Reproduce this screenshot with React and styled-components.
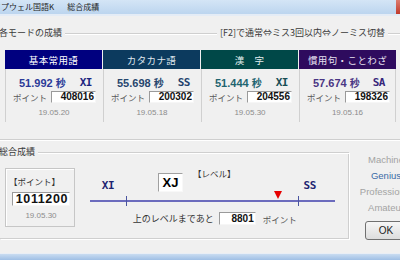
import React from 'react'
import styled, { createGlobalStyle } from 'styled-components'

const JP = `"Noto Sans CJK JP", "Noto Sans", sans-serif`
const NUM = `"Liberation Sans", Arial, sans-serif`
const MONO = `"DejaVu Sans Mono", "Liberation Mono", monospace`

const GlobalStyle = createGlobalStyle`
  html, body {
    margin: 0;
    padding: 0;
    background: #f0f0f0;
  }
  body {
    font-family: ${JP};
  }
`

const modes = [
  { title: '基本常用語', bg: '#00007f', fg: '#ffffff', time: '51.992', rank: 'XI', point: '408016', date: '19.05.20', tc: '#2b3a98', rc: '#1c2580' },
  { title: 'カタカナ語', bg: '#0c3a5e', fg: '#dfe6ee', time: '55.698', rank: 'SS', point: '200302', date: '19.05.18', tc: '#27466e', rc: '#1d416c' },
  { title: '漢　字', bg: '#004848', fg: '#e2eeee', time: '51.444', rank: 'XI', point: '204556', date: '19.05.30', tc: '#1f6470', rc: '#174d55' },
  { title: '慣用句・ことわざ', bg: '#2e0b5e', fg: '#e6e0f0', time: '57.674', rank: 'SA', point: '198326', date: '19.05.16', tc: '#4a3684', rc: '#36267a' },
]

const levels = [
  { name: 'Machine' },
  { name: 'Genius', active: true },
  { name: 'Professional' },
  { name: 'Amateur' },
]

// position of the marker between the current level and the next one
const progress = 184 / 245

function ModeCard({ mode }) {
  return (
    <Card>
      <CardHead $bg={mode.bg} $fg={mode.fg}>{mode.title}</CardHead>
      <CardBody>
        <TimeRow>
          <Time $color={mode.tc}>
            {mode.time}
            <Unit>秒</Unit>
          </Time>
          <Rank $color={mode.rc}>{mode.rank}</Rank>
        </TimeRow>
        <PointRow>
          <PointLabel>ポイント</PointLabel>
          <ValueBox $w={45} $h={12} $size={10}>{mode.point}</ValueBox>
        </PointRow>
        <DateText>{mode.date}</DateText>
      </CardBody>
    </Card>
  )
}

export default function App() {
  return (
    <>
      <GlobalStyle />
      <Window>
        <TitleBar>
          <TitleText $offset={-15}>タイプウェル国語K</TitleText>
          <TitleText $offset={13}>総合成績</TitleText>
          <CloseButton />
        </TitleBar>

        <ModeSection>
          <GroupHead>
            <Caption $first>各モードの成績</Caption>
            <Rule $grow />
            <Caption>[F2]で通常⇔ミス3回以内⇔ノーミス切替</Caption>
            <Rule $w={12} />
          </GroupHead>
          <CardGrid>
            {modes.map((m) => (
              <ModeCard key={m.title} mode={m} />
            ))}
          </CardGrid>
        </ModeSection>

        <TotalRow>
          <TotalGroup>
            <TotalHead>
              <Caption $first>総合成績</Caption>
              <Rule $grow />
            </TotalHead>
            <Frame>
              <PointBox>
                <BoxCaption>【ポイント】</BoxCaption>
                <ValueBox $w={58} $h={14} $size={12.5} $spacing={0.6} $mt={6}>1011200</ValueBox>
                <BoxDate>19.05.30</BoxDate>
              </PointBox>

              <LevelPanel>
                <LabelsRow>
                  <ScaleRank $ml={22}>XI</ScaleRank>
                  <CurrentRank>XJ</CurrentRank>
                  <LevelCaption>【レベル】</LevelCaption>
                  <ScaleRank $ml={68}>SS</ScaleRank>
                </LabelsRow>
                <Bar>
                  <Tick $x={36} />
                  <Tick $x={208} />
                  <Marker style={{ left: `${progress * 100}%` }} />
                </Bar>
                <RemainRow>
                  <span>上のレベルまであと</span>
                  <ValueBox $w={37} $h={13} $size={10} $ml={5}>8801</ValueBox>
                  <RemainUnit>ポイント</RemainUnit>
                </RemainRow>
              </LevelPanel>
            </Frame>
          </TotalGroup>

          <SideCol>
            {levels.map((l) => (
              <SideLabel key={l.name} $active={l.active}>{l.name}</SideLabel>
            ))}
            <OkButton>OK</OkButton>
          </SideCol>
        </TotalRow>

        <BottomStrip />
      </Window>
    </>
  )
}

const Window = styled.div`
  width: 400px;
  height: 260px;
  overflow: hidden;
  display: flex;
  flex-direction: column;
  background: #f0f0f0;
  font-family: ${JP};
  color: #333;
`

const TitleBar = styled.div`
  height: 14px;
  flex-shrink: 0;
  display: flex;
  align-items: center;
  background: linear-gradient(to bottom, #d4e5f6, #bcd5ef);
  border-bottom: 2px solid #e4ecf6;
  font-size: 8px;
  color: #1e1e1e;
  white-space: nowrap;
`

const TitleText = styled.span`
  margin-left: ${(p) => p.$offset}px;
  line-height: 14px;
`

const CloseButton = styled.div`
  margin-left: auto;
  margin-right: -20px;
  width: 24px;
  height: 14px;
  flex-shrink: 0;
  background: linear-gradient(to bottom, #dc7b6e, #c13b2c);
`

const GroupHead = styled.div`
  display: flex;
  align-items: center;
  height: 12px;
  margin-left: -1px;
`

const Caption = styled.span`
  font-size: 9px;
  line-height: 12px;
  color: #3a3a3a;
  padding: 0 3px 0 ${(p) => (p.$first ? 0 : 3)}px;
  white-space: nowrap;
`

const Rule = styled.div`
  flex: ${(p) => (p.$grow ? 1 : 'none')};
  width: ${(p) => (p.$w ? `${p.$w}px` : 'auto')};
  height: 1px;
  background: #cfcfcf;
  box-shadow: 0 1px 0 #ffffff;
`

const ModeSection = styled.section`
  padding: 11px 0 17px;
  border-bottom: 1px solid #cfcfcf;
  box-shadow: 0 1px 0 #ffffff;
`

const CardGrid = styled.div`
  display: grid;
  grid-template-columns: repeat(4, 97px);
  column-gap: 1px;
  margin-top: 11px;
  padding-left: 5px;
`

const Card = styled.div`
  display: flex;
  flex-direction: column;
  &:last-child > div:last-child {
    border-right: 1px solid #d0d0d0;
  }
`

const CardHead = styled.div`
  height: 19px;
  display: flex;
  align-items: center;
  justify-content: center;
  background: ${(p) => p.$bg};
  color: ${(p) => p.$fg};
  font-size: 9.5px;
  letter-spacing: 0.4px;
  white-space: nowrap;
`

const CardBody = styled.div`
  height: 53px;
  box-sizing: border-box;
  display: flex;
  flex-direction: column;
  padding-top: 6px;
  border-left: 1px solid #d0d0d0;
`

const TimeRow = styled.div`
  display: flex;
  align-items: center;
  justify-content: space-between;
  height: 14px;
  padding: 0 10px 0 13px;
`

const Time = styled.span`
  font-family: ${NUM};
  font-weight: bold;
  font-size: 11px;
  color: ${(p) => p.$color};
  white-space: nowrap;
`

const Unit = styled.span`
  font-family: ${JP};
  font-size: 10px;
  font-weight: 700;
  margin-left: 3px;
`

const Rank = styled.span`
  font-family: ${MONO};
  font-weight: bold;
  font-size: 11px;
  letter-spacing: -0.5px;
  color: ${(p) => p.$color};
`

const PointRow = styled.div`
  display: flex;
  align-items: center;
  height: 13px;
  margin-top: 1px;
  padding-left: 7px;
`

const PointLabel = styled.span`
  width: 38px;
  font-size: 8.5px;
  color: #5a5a5a;
  white-space: nowrap;
`

const ValueBox = styled.div`
  width: ${(p) => p.$w}px;
  height: ${(p) => p.$h}px;
  margin-top: ${(p) => p.$mt || 0}px;
  margin-left: ${(p) => p.$ml || 0}px;
  box-sizing: border-box;
  background: #ffffff;
  border: 1px solid;
  border-color: #9a9a9a #f6f6f6 #f6f6f6 #9a9a9a;
  font-family: ${NUM};
  font-weight: bold;
  font-size: ${(p) => p.$size}px;
  letter-spacing: ${(p) => p.$spacing || 0}px;
  line-height: ${(p) => p.$h - 2}px;
  color: #111;
  text-align: right;
  padding-right: 1px;
`

const DateText = styled.div`
  margin-top: 5px;
  font-family: ${NUM};
  font-size: 8px;
  line-height: 10px;
  color: #8c8c8c;
  text-align: center;
`

const TotalRow = styled.div`
  display: flex;
  margin-top: 6px;
`

const TotalGroup = styled.div`
  width: 349px;
  flex-shrink: 0;
  display: flex;
  flex-direction: column;
`

const TotalHead = styled(GroupHead)`
  margin-bottom: -6px;
  position: relative;
  z-index: 1;
`

const Frame = styled.div`
  display: flex;
  align-items: flex-start;
  padding: 16px 0 11px 5px;
  border-right: 1px solid #cfcfcf;
  border-bottom: 1px solid #cfcfcf;
  box-shadow: 1px 1px 0 #ffffff;
`

const PointBox = styled.div`
  width: 70px;
  height: 59px;
  box-sizing: border-box;
  display: flex;
  flex-direction: column;
  padding: 7px 0 0 6px;
  border: 1px solid #c6c6c6;
  box-shadow: inset 1px 1px 0 #ffffff;
`

const BoxCaption = styled.div`
  font-size: 8.5px;
  line-height: 10px;
  color: #333;
  margin-left: -3px;
  white-space: nowrap;
`

const BoxDate = styled(DateText)`
  width: 58px;
  margin-top: 5px;
`

const LevelPanel = styled.div`
  width: 269px;
  margin-left: 5px;
  display: flex;
  flex-direction: column;
`

const LabelsRow = styled.div`
  display: flex;
  align-items: flex-end;
  height: 26px;
`

const ScaleRank = styled.span`
  margin-left: ${(p) => p.$ml}px;
  margin-bottom: 2px;
  font-family: ${MONO};
  font-weight: bold;
  font-size: 11px;
  line-height: 12px;
  letter-spacing: -0.5px;
  color: #1c2470;
`

const CurrentRank = styled.div`
  width: 25px;
  height: 19px;
  margin: 0 0 2px 44px;
  box-sizing: border-box;
  display: flex;
  align-items: center;
  justify-content: center;
  background: #ffffff;
  border: 1px solid;
  border-color: #a0a0a0 #f8f8f8 #f8f8f8 #a0a0a0;
  font-family: ${NUM};
  font-weight: bold;
  font-size: 13px;
  color: #000;
`

const LevelCaption = styled.span`
  align-self: flex-start;
  margin-left: 10px;
  font-size: 8.5px;
  line-height: 10px;
  color: #333;
  white-space: nowrap;
`

const Bar = styled.div`
  position: relative;
  width: 245px;
  height: 2px;
  margin: 6px 0 0 10px;
  background: #6b6bbd;
`

const Tick = styled.div`
  position: absolute;
  left: ${(p) => p.$x}px;
  top: -4px;
  width: 1px;
  height: 10px;
  background: #4a55a0;
`

const Marker = styled.div`
  position: absolute;
  bottom: 3px;
  width: 0;
  height: 0;
  border-left: 4.5px solid transparent;
  border-right: 4.5px solid transparent;
  border-top: 8px solid #e60000;
`

const RemainRow = styled.div`
  display: flex;
  align-items: center;
  height: 13px;
  margin: 10px 0 0 53px;
  font-size: 9px;
  color: #333;
  white-space: nowrap;
`

const RemainUnit = styled.span`
  margin-left: 7px;
  font-size: 8.5px;
  color: #555;
`

const SideCol = styled.div`
  width: 56px;
  margin-left: 9px;
  flex-shrink: 0;
  display: flex;
  flex-direction: column;
  align-items: center;
  padding-top: 6px;
`

const SideLabel = styled.span`
  font-family: ${NUM};
  font-size: 9.5px;
  line-height: 16px;
  white-space: nowrap;
  color: ${(p) => (p.$active ? '#3a6aa6' : '#a3a3a3')};
`

const OkButton = styled.button`
  margin-top: 5px;
  width: 43px;
  height: 19px;
  box-sizing: border-box;
  padding: 0;
  border: 1px solid #707070;
  border-radius: 3px;
  background: linear-gradient(to bottom, #f6f6f6, #dddddd);
  font-family: ${NUM};
  font-size: 10px;
  color: #222;
`

const BottomStrip = styled.div`
  margin-top: auto;
  height: 6px;
  flex-shrink: 0;
  border-top: 1px solid #e9eef5;
  background: linear-gradient(to bottom, #c9dcf1, #9fbfe5);
`
